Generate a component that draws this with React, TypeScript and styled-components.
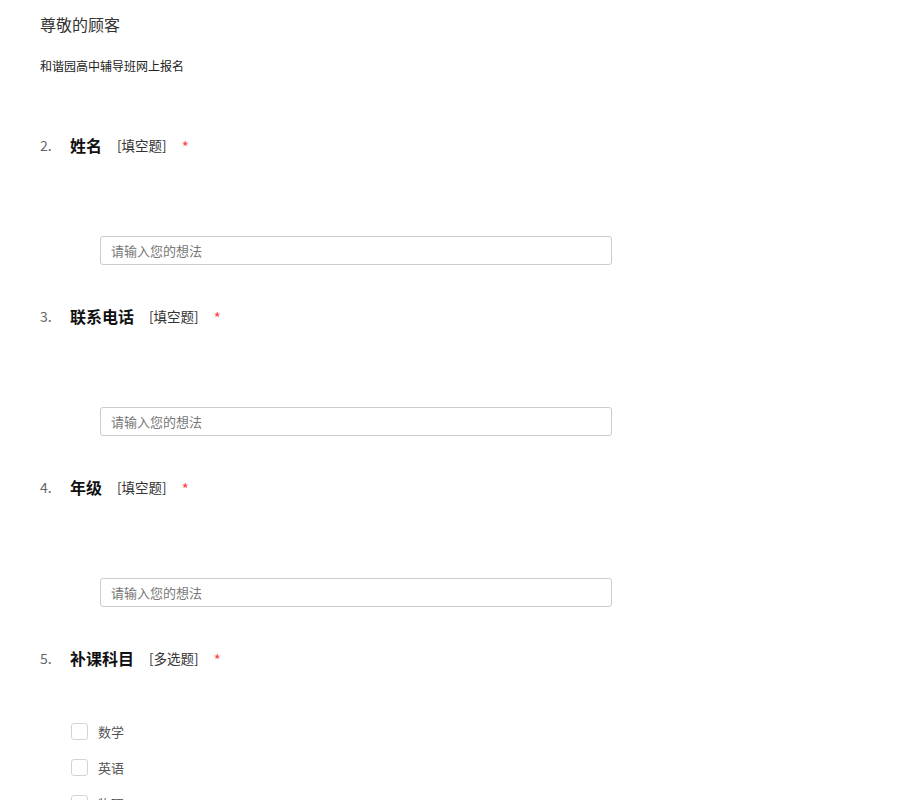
import React from "react";
import styled, { createGlobalStyle } from "styled-components";

const GlobalStyle = createGlobalStyle`
  body {
    margin: 0;
    background: #fff;
    font-family: "Noto Sans CJK SC", "Noto Sans", sans-serif;
  }
`;

type Q = {
  no: number;
  title: string;
  kind: string;
  options?: string[];
};

const questions: Q[] = [
  { no: 2, title: "姓名", kind: "[填空题]" },
  { no: 3, title: "联系电话", kind: "[填空题]" },
  { no: 4, title: "年级", kind: "[填空题]" },
  { no: 5, title: "补课科目", kind: "[多选题]", options: ["数学", "英语", "物理"] },
];

const App = () => {
  return (
    <Page>
      <GlobalStyle />
      <Title>尊敬的顾客</Title>
      <Desc>和谐园高中辅导班网上报名</Desc>
      <List>
        {questions.map((q) => (
          <Question key={q.no}>
            <Header>
              <Num>{q.no}.</Num>
              <QTitle>{q.title}</QTitle>
              <Kind>{q.kind}</Kind>
              <Req>*</Req>
            </Header>
            {q.options ? (
              <Options>
                {q.options.map((o) => (
                  <Option key={o}>
                    <Box />
                    <OptText>{o}</OptText>
                  </Option>
                ))}
              </Options>
            ) : (
              <Input placeholder="请输入您的想法" />
            )}
          </Question>
        ))}
      </List>
    </Page>
  );
};

export default App;

const Page = styled.div`
  padding: 13px 40px 0 40px;
  height: 800px;
  box-sizing: border-box;
  overflow: hidden;
`;
const Title = styled.div`
  font-size: 16px;
  line-height: 22px;
  color: #333;
`;
const Desc = styled.div`
  margin-top: 22px;
  font-size: 12px;
  line-height: 18px;
  color: #222;
`;
const List = styled.div`
  margin-top: 58px;
  display: flex;
  flex-direction: column;
  gap: 39px;
`;
const Question = styled.div`
  display: flex;
  flex-direction: column;
`;
const Header = styled.div`
  display: flex;
  align-items: center;
  height: 24px;
`;
const Num = styled.span`
  width: 30px;
  font-size: 14px;
  color: #666;
`;
const QTitle = styled.span`
  font-size: 16px;
  font-weight: 700;
  color: #111;
`;
const Kind = styled.span`
  margin-left: 15px;
  font-size: 13.5px;
  color: #333;
`;
const Req = styled.span`
  margin-left: 15px;
  font-size: 15px;
  color: #f44;
  position: relative;
  top: 1px;
`;
const Input = styled.input`
  margin: 79px 0 0 60px;
  width: 512px;
  height: 29px;
  box-sizing: border-box;
  border: 1px solid #ccc;
  border-radius: 3px;
  padding: 0 10px;
  font-family: "Noto Sans CJK SC", "Noto Sans", sans-serif;
  font-size: 13px;
  outline: none;
  &::placeholder {
    color: #777;
  }
`;
const Options = styled.div`
  margin: 53px 0 0 31px;
  display: flex;
  flex-direction: column;
  gap: 19px;
`;
const Option = styled.div`
  display: flex;
  align-items: center;
  height: 17px;
`;
const Box = styled.span`
  width: 17px;
  height: 17px;
  box-sizing: border-box;
  border: 1px solid #d4d4d4;
  border-radius: 3px;
  background: #fff;
`;
const OptText = styled.span`
  margin-left: 10px;
  font-size: 13px;
  color: #555;
`;
